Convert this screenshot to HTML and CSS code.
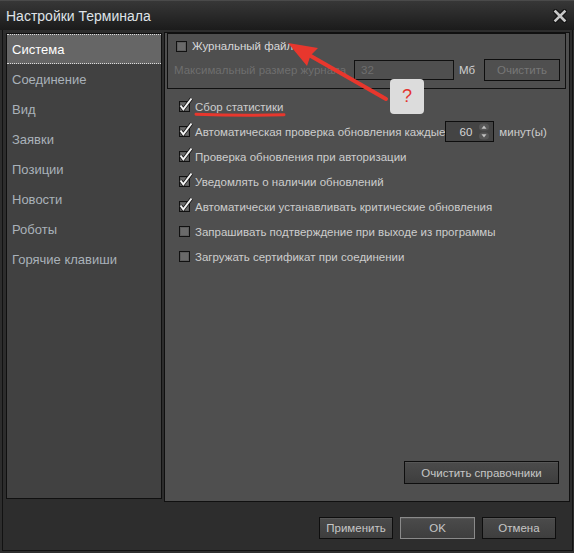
FILE: index.html
```html
<!DOCTYPE html>
<html lang="ru">
<head>
<meta charset="utf-8">
<title>Настройки Терминала</title>
<link rel="stylesheet" href="styles.css">
</head>
<body>
<div class="window">
  <header class="titlebar">
    <span class="title">Настройки Терминала</span>
    <svg class="close" width="14" height="14" viewBox="0 0 14 14" aria-label="Закрыть">
      <path d="M2.5 2.5L11.5 11.5M11.5 2.5L2.5 11.5" stroke="#141414" stroke-width="5" stroke-linecap="square"/>
      <path d="M2.5 2.5L11.5 11.5M11.5 2.5L2.5 11.5" stroke="#c6c6c6" stroke-width="2.6" stroke-linecap="square"/>
    </svg>
  </header>

  <div class="frame">
    <div class="content">
      <nav class="sidebar">
        <div class="nav-item active">Система</div>
        <div class="nav-item">Соединение</div>
        <div class="nav-item">Вид</div>
        <div class="nav-item">Заявки</div>
        <div class="nav-item">Позиции</div>
        <div class="nav-item">Новости</div>
        <div class="nav-item">Роботы</div>
        <div class="nav-item">Горячие клавиши</div>
      </nav>

      <section class="panel">
        <div class="group">
          <div class="group-head"><span class="cb"></span><span>Журнальный файл</span></div>
          <div class="group-row">
            <span class="muted log-label">Максимальный размер журнала</span>
            <span class="field">32</span>
            <span class="unit">Мб</span>
            <span class="btn disabled clear-btn">Очистить</span>
          </div>
        </div>

        <ul class="options">
          <li class="opt"><span class="cb checked"><svg class="tick" width="16" height="16" viewBox="0 0 16 16"><path d="M2.5 8.5L5.3 12.3L13.5 1.5" fill="none" stroke="#141414" stroke-width="3.6"/><path d="M2.5 8.5L5.3 12.3L13.5 1.5" fill="none" stroke="#f4f4f4" stroke-width="2"/></svg></span><span>Сбор статистики</span></li>
          <li class="opt"><span class="cb checked"><svg class="tick" width="16" height="16" viewBox="0 0 16 16"><path d="M2.5 8.5L5.3 12.3L13.5 1.5" fill="none" stroke="#141414" stroke-width="3.6"/><path d="M2.5 8.5L5.3 12.3L13.5 1.5" fill="none" stroke="#f4f4f4" stroke-width="2"/></svg></span><span class="spin-label">Автоматическая проверка обновления каждые</span>
            <span class="spin"><span class="spin-val">60</span>
              <svg class="spin-arrows" width="14" height="19" viewBox="0 0 14 19">
                <rect x="2" y="1.5" width="10" height="7" rx="3.5" fill="#565656"/>
                <rect x="2" y="10.5" width="10" height="7" rx="3.5" fill="#565656"/>
                <path d="M4.5 6.8L7 3.6L9.5 6.8Z" fill="#c2c2c2"/>
                <path d="M4.5 12.2L7 15.4L9.5 12.2Z" fill="#c2c2c2"/>
              </svg>
            </span>
            <span class="spin-unit">минут(ы)</span></li>
          <li class="opt"><span class="cb checked"><svg class="tick" width="16" height="16" viewBox="0 0 16 16"><path d="M2.5 8.5L5.3 12.3L13.5 1.5" fill="none" stroke="#141414" stroke-width="3.6"/><path d="M2.5 8.5L5.3 12.3L13.5 1.5" fill="none" stroke="#f4f4f4" stroke-width="2"/></svg></span><span>Проверка обновления при авторизации</span></li>
          <li class="opt"><span class="cb checked"><svg class="tick" width="16" height="16" viewBox="0 0 16 16"><path d="M2.5 8.5L5.3 12.3L13.5 1.5" fill="none" stroke="#141414" stroke-width="3.6"/><path d="M2.5 8.5L5.3 12.3L13.5 1.5" fill="none" stroke="#f4f4f4" stroke-width="2"/></svg></span><span>Уведомлять о наличии обновлений</span></li>
          <li class="opt"><span class="cb checked"><svg class="tick" width="16" height="16" viewBox="0 0 16 16"><path d="M2.5 8.5L5.3 12.3L13.5 1.5" fill="none" stroke="#141414" stroke-width="3.6"/><path d="M2.5 8.5L5.3 12.3L13.5 1.5" fill="none" stroke="#f4f4f4" stroke-width="2"/></svg></span><span>Автоматически устанавливать критические обновления</span></li>
          <li class="opt"><span class="cb"></span><span>Запрашивать подтверждение при выходе из программы</span></li>
          <li class="opt"><span class="cb"></span><span>Загружать сертификат при соединении</span></li>
        </ul>

        <div class="panel-foot">
          <span class="btn wide">Очистить справочники</span>
        </div>
      </section>
    </div>

    <div class="footer">
      <span class="btn action apply">Применить</span>
      <span class="btn action focus">OK</span>
      <span class="btn action cancel">Отмена</span>
    </div>
  </div>

  <svg class="annot" width="574" height="553" viewBox="0 0 574 553">
    <path d="M196 114.2Q240 116 284 114.8" fill="none" stroke="#e8372d" stroke-width="3" stroke-linecap="round"/>
    <path d="M386 99L309 55" fill="none" stroke="#e8372d" stroke-width="4" stroke-linecap="round"/>
    <path d="M288 43L318 48L310.5 55.5L307 66Z" fill="#e8372d"/>
  </svg>
  <div class="badge">?</div>
</div>
</body>
</html>
```

FILE: styles.css
```css
* {
  box-sizing: border-box;
  margin: 0;
  padding: 0;
}

html,
body {
  width: 574px;
  height: 553px;
  overflow: hidden;
  background: #2d2d2d;
}

body {
  font-family: "Liberation Sans", Arial, sans-serif;
  font-size: 11.5px;
}

.window {
  position: relative;
  width: 574px;
  height: 553px;
  display: flex;
  flex-direction: column;
  background: #2d2d2d;
}

/* title bar */
.titlebar {
  flex: 0 0 30px;
  display: flex;
  align-items: center;
  justify-content: space-between;
  padding: 0 7px 0 6px;
  background: linear-gradient(#373737, #1b1b1b);
  border-top: 1px solid #4a4a4a;
}

.title {
  color: #dfe3e8;
  font-size: 14px;
}

.close {
  display: block;
  margin-top: 1px;
}

/* dialog body */
.frame {
  flex: 1;
  margin: 0 1px 2px 2px;
  border: 1px solid #121212;
  border-top: none;
  display: flex;
  flex-direction: column;
}

.content {
  display: flex;
  align-items: flex-start;
  gap: 2px;
  padding: 2px 0 0 3px;
}

/* navigation list */
.sidebar {
  width: 156px;
  height: 466px;
  margin-top: 1px;
  background: #414141;
  border: 1px solid #101010;
}

.nav-item {
  height: 30px;
  display: flex;
  align-items: center;
  padding-left: 5px;
  font-size: 13px;
  color: #a9b1b9;
}

.nav-item.active {
  background: #666666;
  color: #ffffff;
  border-top: 1px dotted #dddddd;
  border-bottom: 1px dotted #dddddd;
}

/* settings page */
.panel {
  width: 406px;
  height: 470px;
  background: #4f4f4f;
  border: 1px solid #101010;
  display: flex;
  flex-direction: column;
  padding: 0 3px 0 2px;
}

.group {
  height: 56px;
  border: 1px solid #101010;
}

.group-head {
  height: 24px;
  display: flex;
  align-items: center;
  gap: 5px;
  padding-left: 8px;
  color: #d8d8d8;
}

.group-row {
  height: 24px;
  display: flex;
  align-items: center;
  padding-left: 6px;
}

.muted {
  color: #6e6e6e;
}

.log-label {
  flex: 0 0 180px;
  white-space: nowrap;
}

.field {
  flex: 0 0 100px;
  height: 20px;
  border: 1px solid #101010;
  color: #6e6e6e;
  display: flex;
  align-items: center;
  padding-left: 6px;
}

.unit {
  flex: 0 0 30px;
  padding-left: 5px;
  color: #cfcfcf;
}

.clear-btn {
  flex: 0 0 76px;
  height: 22px;
}

/* checkbox */
.cb {
  position: relative;
  flex: 0 0 11px;
  width: 11px;
  height: 11px;
  border: 1px solid #111111;
  background: #6a6a6a;
  box-shadow: inset 0 0 0 1px #5c5c5c;
}

.tick {
  position: absolute;
  left: -2px;
  top: -5px;
}

.options {
  list-style: none;
  margin-top: 5px;
  padding-left: 12px;
}

.opt {
  height: 25px;
  display: flex;
  align-items: center;
  color: #cdcdcd;
  white-space: nowrap;
}

.opt .cb {
  margin-right: 5px;
}

.spin-label {
  flex: 0 0 249px;
}

.spin {
  width: 49px;
  height: 21px;
  display: flex;
  align-items: center;
  border: 1px solid #0e0e0e;
  background: #444444;
  margin-right: 5px;
}

.spin-val {
  flex: 1;
  text-align: right;
  padding-right: 5px;
  color: #d6d6d6;
}

.spin-arrows {
  display: block;
  margin-right: 2px;
}

.spin-unit {
  color: #cdcdcd;
}

.panel-foot {
  margin-top: auto;
  display: flex;
  justify-content: flex-end;
  padding: 0 7px 17px 0;
}

/* buttons */
.btn {
  display: flex;
  align-items: center;
  justify-content: center;
  border: 1px solid #0e0e0e;
  background: linear-gradient(#4b4b4b, #3e3e3e);
  box-shadow: inset 0 1px 0 rgba(255, 255, 255, 0.07);
  color: #c6c6c6;
  white-space: nowrap;
}

.btn.disabled {
  background: #4f4f4f;
  box-shadow: none;
  color: #777777;
}

.btn.wide {
  width: 155px;
  height: 23px;
}

.footer {
  display: flex;
  justify-content: flex-end;
  gap: 7px;
  padding: 15px 16px 0 0;
}

.btn.action {
  height: 22px;
  width: 75px;
}

.btn.apply,
.btn.cancel {
  width: 74px;
}

.btn.focus {
  border-color: #8a8a8a;
}

/* callout drawn over the page */
.annot {
  position: absolute;
  left: 0;
  top: 0;
  pointer-events: none;
}

.badge {
  position: absolute;
  left: 390px;
  top: 79px;
  width: 34px;
  height: 35px;
  border-radius: 4px;
  background: #dcdcdc;
  color: #e3342f;
  font-size: 18px;
  display: flex;
  align-items: center;
  justify-content: center;
}
```
